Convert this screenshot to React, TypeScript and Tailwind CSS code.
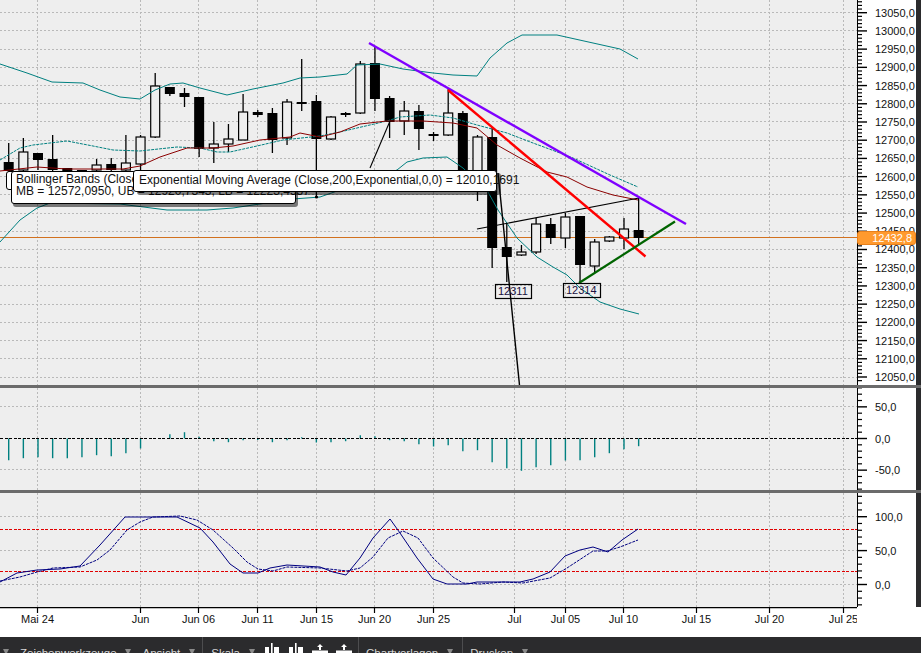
const W = 857;

// price -> y on the main pane
const priceY = (p: number) => 12.7 + (13050 - p) * 0.3643;
const GRID_X = [37.5, 140.5, 198.5, 257.5, 316.5, 374.5, 433.5, 514.5, 565.5, 623.5, 696.5, 769.5, 843.5];
const TIME_LABELS = ['Mai 24', 'Jun', 'Jun 06', 'Jun 11', 'Jun 15', 'Jun 20', 'Jun 25', 'Jul', 'Jul 05', 'Jul 10', 'Jul 15', 'Jul 20', 'Jul 25'];

// [bodyTop, bodyBottom, wickTop, wickBottom, filled]
const CANDLES: [number, number, number, number, boolean][] = [
  [162, 171, 143, 176, true],
  [152, 170, 138, 172, false],
  [153, 160, 153, 170, true],
  [159, 170, 135, 172, true],
  [168, 172, 168, 172, true],
  [170, 172, 170, 172, true],
  [165, 170, 159, 172, false],
  [164, 170, 158, 172, true],
  [163, 170, 135, 172, false],
  [137, 164, 135, 170, false],
  [86, 137, 73, 138, false],
  [87, 94, 87, 96, true],
  [93, 97, 88, 107, true],
  [97, 149, 97, 157, true],
  [144, 148, 122, 163, false],
  [139, 144, 124, 152, false],
  [112, 140, 94, 140, false],
  [112, 115, 110, 117, true],
  [113, 140, 108, 153, true],
  [102, 138, 99, 145, false],
  [102, 104, 59, 111, true],
  [101, 139, 95, 197, true],
  [117, 139, 116, 140, false],
  [113, 115, 112, 117, true],
  [64, 113, 61, 114, false],
  [63, 99, 47, 111, true],
  [98, 122, 96, 138, true],
  [111, 121, 101, 135, false],
  [111, 129, 105, 150, true],
  [134, 136, 132, 141, true],
  [113, 135, 88, 136, false],
  [113, 180, 111, 185, true],
  [137, 185, 135, 201, false],
  [137, 248, 127, 268, true],
  [247, 257, 223, 282, true],
  [252, 255, 245, 256, false],
  [224, 252, 218, 254, false],
  [224, 238, 218, 244, true],
  [217, 238, 213, 248, false],
  [216, 265, 216, 282, true],
  [242, 266, 239, 272, false],
  [237, 241, 236, 242, false],
  [229, 238, 218, 249, false],
  [230, 238, 198, 244, true],
];
const candleX = (i: number) => 8.7 + 14.65 * i;

const UPPER_BAND = '0,64 27,73 52,82 83,83 100,90 120,97 140,99 155,90 170,84 183,83 200,88 227,95 253,89 283,83 300,78 320,77 347,74 357,65 380,64 403,69 433,73 453,75 477,76 490,58 507,43 522,35 557,35 593,43 620,49 638,59';
const MID_BAND = '0,160 20,148 33,145 67,141 93,146 113,150 140,151 177,147 200,148 217,152 230,152 257,146 283,140 320,136 340,132 357,128 387,121 400,117 430,115 453,118 477,125 507,133 533,143 560,153 573,158 610,175 638,187';
const EMA = '0,171 37,167 67,169 123,169 140,166 160,157 187,148 213,148 233,146 260,140 290,137 300,133 320,137 340,132 360,124 387,121 423,121 453,123 477,128 497,145 520,158 547,172 567,177 587,187 613,195 638,200';
const LOWER_BAND = '0,242 20,220 37,208 50,203 120,204 167,210 207,210 233,208 293,199 320,197 397,170 407,162 423,158 447,157 463,168 488,192 498,210 517,238 537,257 553,267 567,275 580,288 600,302 620,309 639,314';

// distance from the zero line, positive is down
const MACD = [21.7, 19.7, 18.7, 19.7, 19.7, 18.7, 16.7, 17.7, 14.7, 10, 0, -4.3, -6.3, -1.7, 2.7, 3.7, 1.7, 1.5, 3.7, 1.7, -1.3, 4, 3.7, 2.7, -3.3, -2.3, 1.7, 2.7, 5.7, 8, 6.7, 12.7, 11.7, 23.7, 29.7, 32.3, 28.7, 26.7, 22, 21.7, 18.7, 14.7, 10.7, 7.7];

const STOCH_K = '0,582 17,573 37,570 60,569 80,566 100,545 125,517 148,517 177,517 200,528 213,542 230,564 243,573 258,573 270,568 287,565 320,567 333,572 346,575 360,558 373,538 390,519 400,533 417,558 433,579 447,584 467,584 477,582 520,582 533,579 550,572 565,556 580,550 593,547 608,552 622,540 638,529';
const STOCH_D = '0,581 20,577 37,572 53,568 80,567 97,560 110,550 127,530 140,522 153,517 180,516 197,520 213,530 233,548 247,562 258,569 273,571 287,567 320,568 347,571 360,568 373,557 388,538 403,531 418,538 433,558 453,577 463,583 480,584 503,582 523,583 550,578 567,568 593,551 607,551 620,547 638,540';

function VGrid({ top, bottom }: { top: number; bottom: number }) {
  return (
    <>
      {GRID_X.map((x) => (
        <line key={x} x1={x} x2={x} y1={top} y2={bottom} stroke="#b9b9b9" strokeDasharray="2 2" shapeRendering="crispEdges" />
      ))}
    </>
  );
}

function HGrid({ ys }: { ys: number[] }) {
  return (
    <>
      {ys.map((y) => (
        <line key={y} x1={0} x2={W} y1={y} y2={y} stroke="#b9b9b9" strokeDasharray="2 2" shapeRendering="crispEdges" />
      ))}
    </>
  );
}

// right side scale, ticks every `step` units
function Scale({
  top,
  height,
  from,
  to,
  step,
  labelEvery,
  yOf,
}: {
  top: number;
  height: number;
  from: number;
  to: number;
  step: number;
  labelEvery: number;
  yOf: (v: number) => number;
}) {
  const ticks: number[] = [];
  for (let v = from; v <= to; v += step) ticks.push(v);
  return (
    <svg className="block h-full w-[59px] bg-white" viewBox={`857 ${top} 59 ${height}`}>
      <line x1={857} x2={857} y1={top} y2={top + height} stroke="#000" strokeWidth={2} />
      {ticks.map((v) => {
        const major = v % labelEvery === 0;
        const y = yOf(v);
        return (
          <g key={v}>
            <line x1={857} x2={major ? 867 : 862} y1={y} y2={y} stroke="#000" strokeWidth={major ? 1.4 : 1.2} />
            {major && (
              <text x={875} y={y + 4} className="text-[11px]" fill="#111">
                {v},0
              </text>
            )}
          </g>
        );
      })}
    </svg>
  );
}

function MainPane() {
  const ys: number[] = [];
  for (let p = 13050; p >= 12050; p -= 50) ys.push(priceY(p));
  return (
    <div className="relative h-[385px] w-[857px] shrink-0 overflow-hidden">
      <svg className="block h-full w-full bg-[#eeeeee]" viewBox="0 0 857 385">
        <HGrid ys={ys} />
        <VGrid top={0} bottom={385} />
        <line x1={0} x2={W} y1={237.5} y2={237.5} stroke="#d2711f" strokeWidth={1} shapeRendering="crispEdges" />
        {CANDLES.map(([top, bottom, wickTop, wickBottom, filled], i) => {
          const x = candleX(i);
          return (
            <g key={i}>
              <line x1={x} x2={x} y1={wickTop} y2={wickBottom} stroke="#000" strokeWidth={1.3} />
              {filled ? (
                <rect x={x - 5} y={top} width={10} height={bottom - top} fill="#000" />
              ) : (
                <rect x={x - 4.5} y={top} width={9} height={bottom - top} fill="#eeeeee" stroke="#000" strokeWidth={1.2} />
              )}
            </g>
          );
        })}
        <polyline points={UPPER_BAND} fill="none" stroke="#008080" strokeWidth={1} />
        <polyline points={MID_BAND} fill="none" stroke="#008080" strokeWidth={1} strokeDasharray="3 1" />
        <polyline points={LOWER_BAND} fill="none" stroke="#008080" strokeWidth={1} />
        <polyline points={EMA} fill="none" stroke="#8b0000" strokeWidth={1} />
        <line x1={390} y1={121} x2={370} y2={168} stroke="#000" strokeWidth={1.1} />
        <line x1={498} y1={173} x2={519.5} y2={385} stroke="#000" strokeWidth={1.4} />
        <line x1={477} y1={229} x2={639} y2={198} stroke="#000" strokeWidth={1.1} />
        <line x1={369} y1={43} x2={686} y2={224} stroke="#7f00ff" strokeWidth={2.4} />
        <line x1={448} y1={90} x2={645.5} y2={256.5} stroke="#ff0000" strokeWidth={2.4} />
        <line x1={579} y1={283} x2={675} y2={221.5} stroke="#006400" strokeWidth={2.2} />
        <rect x={495.5} y={284.5} width={36} height={14} fill="none" stroke="#000" strokeWidth={1.2} />
        <text x={498} y={295} className="text-[11px]" fill="#1b1040">12311</text>
        <rect x={563.5} y={283.5} width={37} height={14} fill="none" stroke="#000" strokeWidth={1.2} />
        <text x={566} y={294} className="text-[11px]" fill="#1b1040">12314</text>
        <circle cx={316.5} cy={197} r={1.6} fill="#000" />
      </svg>

      {/* crosshair tooltips stacked over the chart */}
      <div className="absolute left-[6px] top-[171px] h-[19px] w-[20px] rounded-[3px] border-[1.5px] border-black bg-white" />
      <div className="absolute left-[11px] top-[171px] h-[33px] w-[285px] rounded-[3px] border-[1.5px] border-black bg-white pl-[4px] pt-[1px] text-[12px] leading-[12px] whitespace-nowrap text-[#111] shadow-[2px_3px_0_rgba(0,0,0,0.5)]">
        <div>Bollinger Bands (Close,20,2,0)</div>
        <div>MB = 12572,0950, UB = 12920,7343, LB = 12223,4557</div>
      </div>
      <div className="absolute left-[133px] top-[170px] h-[22px] w-[364px] rounded-[3px] border-[1.5px] border-black bg-white pl-[5px] pt-[3px] text-[12px] leading-[13px] whitespace-nowrap text-[#111] shadow-[4px_3px_0_rgba(0,0,0,0.5)]">
        Exponential Moving Average (Close,200,Exponential,0,0) = 12010,1691
      </div>
    </div>
  );
}

function MacdPane() {
  return (
    <svg className="block h-[102px] w-[857px] shrink-0 bg-[#eeeeee]" viewBox="0 388 857 102">
      <HGrid ys={[406.5, 469.5]} />
      <VGrid top={388} bottom={490} />
      {MACD.map((d, i) =>
        d === 0 ? null : (
          <line key={i} x1={candleX(i)} x2={candleX(i)} y1={438.5} y2={438.5 + d} stroke="#008080" strokeWidth={1.4} />
        )
      )}
      <line x1={0} x2={W} y1={438.5} y2={438.5} stroke="#000" strokeDasharray="3 1.5" shapeRendering="crispEdges" />
    </svg>
  );
}

function StochPane() {
  return (
    <svg className="block h-[114px] w-[857px] shrink-0 bg-[#eeeeee]" viewBox="0 493 857 114">
      <HGrid ys={[516.5, 550.5, 584.5]} />
      <VGrid top={493} bottom={607} />
      <line x1={0} x2={W} y1={529.5} y2={529.5} stroke="#e00000" strokeDasharray="3 1.5" shapeRendering="crispEdges" />
      <line x1={0} x2={W} y1={571.5} y2={571.5} stroke="#e00000" strokeDasharray="3 1.5" shapeRendering="crispEdges" />
      <polyline points={STOCH_K} fill="none" stroke="#000080" strokeWidth={1} />
      <polyline points={STOCH_D} fill="none" stroke="#000080" strokeWidth={1} strokeDasharray="3 1" />
    </svg>
  );
}

function TimeAxis() {
  return (
    <svg className="block h-[30px] w-[857px] shrink-0 bg-white" viewBox="0 607 857 30">
      <line x1={0} x2={W} y1={607.5} y2={607.5} stroke="#000" strokeWidth={1.4} />
      {GRID_X.map((x, i) => (
        <g key={x}>
          <line x1={x} x2={x} y1={607} y2={613} stroke="#000" strokeWidth={1.2} />
          <text x={x} y={623} textAnchor="middle" className="text-[11px]" fill="#111">
            {TIME_LABELS[i]}
          </text>
        </g>
      ))}
    </svg>
  );
}

function Separator() {
  return <div className="h-[3px] shrink-0 bg-[#6b6b6b]" />;
}

function Arrow({ className }: { className: string }) {
  return (
    <svg className={`mt-[2px] shrink-0 ${className}`} width="6" height="6" viewBox="0 0 6 6" fill="#8a8a8a">
      <path d="M0 0h6L3 6z" />
    </svg>
  );
}

function BarLabel({ children, className }: { children: string; className: string }) {
  return <span className={`block shrink-0 text-[11.5px] leading-[12px] text-[#d6d6d6] ${className}`}>{children}</span>;
}

function Divider({ className }: { className: string }) {
  return <div className={`-mt-[10px] h-[16px] w-px shrink-0 bg-[#4d4d4f] ${className}`} />;
}

// candlestick style button
function CandleIcon() {
  return (
    <svg width="16" height="12" viewBox="0 0 16 12" fill="#fff">
      <rect x="7" y="0" width="1.6" height="12" />
      <rect x="1" y="4" width="4" height="6" />
      <rect x="10" y="4" width="5" height="6" />
    </svg>
  );
}

function ArrowBarIcon() {
  return (
    <svg width="16" height="12" viewBox="0 0 16 12" fill="#fff">
      <path d="M8 1l3 3H9v3H7V4H5z" />
      <rect x="0" y="7.5" width="16" height="5" />
    </svg>
  );
}

export default function App() {
  return (
    <div className="flex h-[653px] w-[921px] flex-col overflow-hidden bg-white font-['Liberation_Sans',Arial,sans-serif]">
      <div className="relative flex h-[385px] shrink-0">
        <MainPane />
        <Scale top={0} height={385} from={12040} to={13090} step={10} labelEvery={50} yOf={priceY} />
        <div className="w-[5px] bg-[#2b2b2d]" />
        {/* last price tag sits over the scale */}
        <div className="absolute left-[857px] top-[231px] flex h-[14px] w-[59px] items-center justify-end rounded-[3px] border border-[#e8801a] bg-[#ff9a2e] pr-[3px] text-[11px] leading-none text-white">
          12432,8
        </div>
      </div>
      <Separator />
      <div className="flex h-[102px] shrink-0">
        <MacdPane />
        <Scale top={388} height={102} from={-80} to={80} step={10} labelEvery={50} yOf={(v) => 438.5 - v * 0.633} />
        <div className="w-[5px] bg-[#2b2b2d]" />
      </div>
      <Separator />
      <div className="flex h-[114px] shrink-0">
        <StochPane />
        <Scale top={493} height={114} from={-30} to={140} step={10} labelEvery={50} yOf={(v) => 584.5 - v * 0.678} />
        <div className="w-[5px] bg-[#2b2b2d]" />
      </div>
      <div className="flex h-[30px] shrink-0">
        <TimeAxis />
      </div>
      <div className="flex h-[16px] shrink-0 items-start overflow-hidden bg-[#2b2b2d] pl-[3px] pt-[10px]">
        <Arrow className="" />
        <BarLabel className="ml-[11px]">Zeichenwerkzeuge</BarLabel>
        <Arrow className="ml-[8px]" />
        <BarLabel className="ml-[12px]">Ansicht</BarLabel>
        <Arrow className="ml-[9px]" />
        <Divider className="ml-[7px]" />
        <BarLabel className="ml-[8px]">Skala</BarLabel>
        <Arrow className="ml-[9px]" />
        <div className="-mt-[4px] ml-[9px] flex shrink-0 gap-[8px]">
          <CandleIcon />
          <CandleIcon />
          <ArrowBarIcon />
          <ArrowBarIcon />
        </div>
        <Divider className="ml-[6px]" />
        <BarLabel className="ml-[7px]">Chartvorlagen</BarLabel>
        <Arrow className="ml-[9px]" />
        <Divider className="ml-[9px]" />
        <BarLabel className="ml-[7px]">Drucken</BarLabel>
        <Arrow className="ml-[9px]" />
      </div>
    </div>
  );
}
